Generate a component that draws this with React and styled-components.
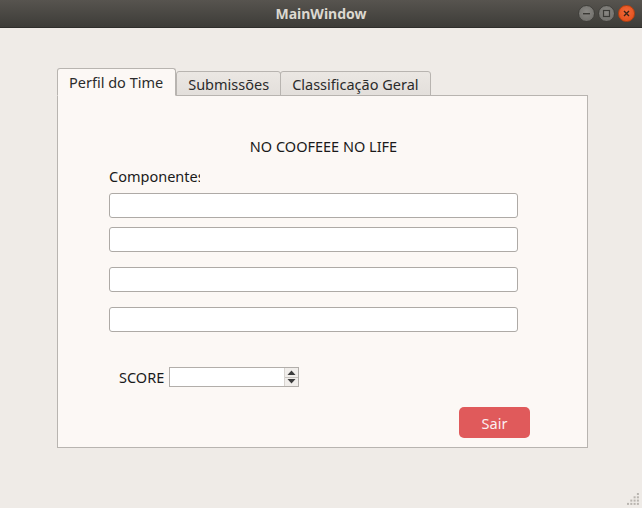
import React from "react";
import styled, { createGlobalStyle } from "styled-components";

const Global = createGlobalStyle`
  html, body { margin: 0; padding: 0; }
  body { font-family: "Noto Sans", "DejaVu Sans", sans-serif; background: #efebe7; }
  * { box-sizing: border-box; }
`;

const Window = styled.div`
  width: 642px;
  height: 508px;
  display: flex;
  flex-direction: column;
  background: #efebe7;
  position: relative;
  overflow: hidden;
`;

const TitleBar = styled.div`
  height: 28px;
  flex: none;
  background: linear-gradient(#57544f, #3d3c38);
  display: flex;
  align-items: center;
  justify-content: center;
  position: relative;
  border-bottom: 1px solid #2f2e2b;
`;

const Title = styled.div`
  color: #dcd8d0;
  font-family: "Noto Sans", sans-serif;
  font-weight: bold;
  font-size: 14px;
`;

const Controls = styled.div`
  position: absolute;
  right: 7px;
  top: 5px;
  display: flex;
  gap: 3px;
`;

const CtrlBtn = styled.div`
  width: 17px;
  height: 17px;
  border-radius: 50%;
  background: ${(p) => (p.$close ? "radial-gradient(circle at 50% 40%, #f26a3a, #df4a16)" : "radial-gradient(circle at 50% 40%, #8a8884, #6a6965)")};
  border: 1px solid ${(p) => (p.$close ? "#b8400f" : "#403f3b")};
  display: flex;
  align-items: center;
  justify-content: center;
`;

const Body = styled.div`
  flex: 1;
  padding: 40px 0 0 57px;
`;

const TabBar = styled.div`
  display: flex;
  align-items: flex-end;
  height: 28px;
  position: relative;
  z-index: 1;
`;

const Tab = styled.div`
  height: ${(p) => (p.$active ? "28px" : "25px")};
  padding: ${(p) => (p.$active ? "0 12px 0 11px" : "0 11px")};
  font-size: 14.5px;
  color: #2b2b2b;
  display: flex;
  align-items: center;
  background: ${(p) => (p.$active ? "#fcf8f5" : "linear-gradient(#ebe7e3, #e3dfdb)")};
  border: 1px solid #b8b4b0;
  border-bottom: ${(p) => (p.$active ? "1px solid #fcf8f5" : "1px solid #b8b4b0")};
  border-radius: 3px 3px 0 0;
  margin-right: ${(p) => (p.$active ? "0" : "-1px")};
`;

const Pane = styled.div`
  width: 531px;
  height: 353px;
  margin-top: -1px;
  background: #fcf8f5;
  border: 1px solid #b8b4b0;
  padding: 0 0 0 51px;
  display: flex;
  flex-direction: column;
`;

const TeamName = styled.div`
  margin-top: 41px;
  width: 409px;
  text-align: center;
  font-size: 14.5px;
  color: #1a1a1a;
  line-height: 18px;
  padding-left: 20px;
`;

const FieldLabel = styled.div`
  margin-top: 12px;
  width: 91px;
  overflow: hidden;
  white-space: nowrap;
  font-size: 14.5px;
  line-height: 18px;
  color: #1a1a1a;
`;

const Input = styled.div`
  width: 409px;
  height: 25px;
  background: #ffffff;
  border: 1px solid #aeaaa6;
  border-radius: 3px;
  margin-top: ${(p) => p.$mt}px;
`;

const ScoreRow = styled.div`
  margin-top: 35px;
  padding-left: 10px;
  display: flex;
  align-items: center;
  gap: 5px;
`;

const ScoreLabel = styled.div`
  font-size: 14.5px;
  color: #1a1a1a;
`;

const SpinBox = styled.div`
  width: 130px;
  height: 20px;
  border: 1px solid #b2aeaa;
  background: #fff;
  display: flex;
  justify-content: flex-end;
`;

const Arrows = styled.div`
  width: 14px;
  display: flex;
  flex-direction: column;
  border-left: 1px solid #d8d4d0;
`;

const Arrow = styled.div`
  flex: 1;
  display: flex;
  align-items: center;
  justify-content: center;
  background: #f1eeeb;
  border-top: ${(p) => (p.$down ? "1px solid #c8c4c0" : "none")};
`;

const ButtonRow = styled.div`
  margin-top: 20px;
  padding-left: 350px;
`;

const SairButton = styled.button`
  width: 71px;
  height: 31px;
  border: none;
  border-radius: 5px;
  background: #e05a5b;
  color: #fbeef0;
  font-family: "Noto Sans", sans-serif;
  font-size: 14.5px;
  padding: 0;
`;

const Grip = styled.svg`
  position: absolute;
  right: 2px;
  bottom: 2px;
`;

export default function App() {
  const gripDots = [];
  for (let r = 0; r < 4; r++) {
    for (let c = 3 - r; c < 4; c++) {
      gripDots.push(<rect key={`${r}-${c}`} x={c * 3.3} y={r * 3.3} width="2" height="2" fill="#b9b5b0" />);
    }
  }
  return (
    <Window>
      <Global />
      <TitleBar>
        <Title>MainWindow</Title>
        <Controls>
          <CtrlBtn>
            <svg width="9" height="9" viewBox="0 0 9 9"><rect x="1" y="4" width="7" height="1.4" fill="#3a3935" /></svg>
          </CtrlBtn>
          <CtrlBtn>
            <svg width="9" height="9" viewBox="0 0 9 9"><rect x="1.5" y="1.5" width="6" height="6" fill="none" stroke="#3a3935" strokeWidth="1.2" /></svg>
          </CtrlBtn>
          <CtrlBtn $close>
            <svg width="9" height="9" viewBox="0 0 9 9"><path d="M2 2 L7 7 M7 2 L2 7" stroke="#3a2418" strokeWidth="1.4" /></svg>
          </CtrlBtn>
        </Controls>
      </TitleBar>
      <Body>
        <TabBar>
          <Tab $active>Perfil do Time</Tab>
          <Tab>Submissões</Tab>
          <Tab>Classificação Geral</Tab>
        </TabBar>
        <Pane>
          <TeamName>NO COOFEEE NO LIFE</TeamName>
          <FieldLabel>Componentes</FieldLabel>
          <Input $mt={8} />
          <Input $mt={9} />
          <Input $mt={15} />
          <Input $mt={15} />
          <ScoreRow>
            <ScoreLabel>SCORE</ScoreLabel>
            <SpinBox>
              <Arrows>
                <Arrow>
                  <svg width="9" height="5" viewBox="0 0 9 5"><path d="M0.5 5 L4.5 0.5 L8.5 5 Z" fill="#3c3c3c" /></svg>
                </Arrow>
                <Arrow $down>
                  <svg width="9" height="5" viewBox="0 0 9 5"><path d="M0.5 0 L4.5 4.5 L8.5 0 Z" fill="#3c3c3c" /></svg>
                </Arrow>
              </Arrows>
            </SpinBox>
          </ScoreRow>
          <ButtonRow>
            <SairButton>Sair</SairButton>
          </ButtonRow>
        </Pane>
      </Body>
      <Grip width="13" height="13" viewBox="0 0 13 13">{gripDots}</Grip>
    </Window>
  );
}
